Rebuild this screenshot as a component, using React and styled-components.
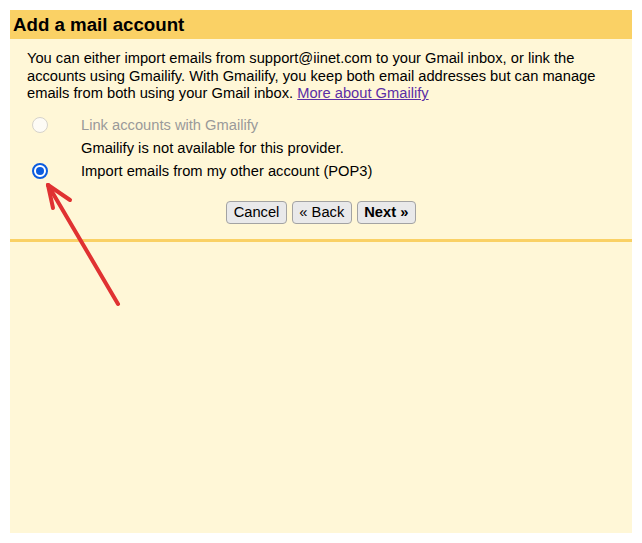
import React from "react";
import styled, { createGlobalStyle } from "styled-components";

const Global = createGlobalStyle`
  html, body { margin: 0; padding: 0; background: #ffffff; }
  body { font-family: "Liberation Sans", Arial, sans-serif; color: #000; }
`;

const Page = styled.div`
  position: relative;
  padding: 10px 10px 10px 10px;
  width: 642px;
  height: 543px;
  box-sizing: border-box;
`;

const Panel = styled.div`
  background: #fff7d7;
  height: 523px;
  display: flex;
  flex-direction: column;
`;

const Header = styled.div`
  background: #fad165;
  height: 29px;
  display: flex;
  align-items: center;
  padding-left: 3px;
  font-size: 18.7px;
  font-weight: bold;
`;

const Body = styled.div`
  padding: 11px 17px 15px 17px;
  border-bottom: 3px solid #fad165;
`;

const Intro = styled.p`
  margin: 0;
  font-size: 14.7px;
  line-height: 17.5px;
`;

const Link = styled.a`
  color: #5b2ea6;
  text-decoration: underline;
`;

const Options = styled.div`
  margin-top: 14px;
  display: grid;
  grid-template-columns: 54px 1fr;
  row-gap: 6px;
  align-items: center;
`;

const Radio = styled.span`
  justify-self: start;
  margin-left: 5px;
  width: 16px;
  height: 16px;
  box-sizing: border-box;
  border-radius: 50%;
  border: ${(p) => (p.checked ? "2px solid #0b5cdf" : "1.5px solid #d6d3cb")};
  background: ${(p) => (p.checked ? "#ffffff" : "#fdfbf6")};
  display: flex;
  align-items: center;
  justify-content: center;
  &::after {
    content: "";
    display: ${(p) => (p.checked ? "block" : "none")};
    width: 8px;
    height: 8px;
    border-radius: 50%;
    background: #0b5cdf;
  }
`;

const Label = styled.span`
  font-size: 14.7px;
  line-height: 17px;
  color: ${(p) => (p.disabled ? "#9a9a9a" : "#000")};
  grid-column: 2;
`;

const Buttons = styled.div`
  margin-top: 21px;
  display: flex;
  justify-content: center;
  gap: 5px;
`;

const Button = styled.button`
  font-family: "Liberation Sans", Arial, sans-serif;
  font-size: 14.7px;
  font-weight: ${(p) => (p.primary ? "bold" : "normal")};
  height: 23px;
  padding: 0 6.5px;
  border: 1px solid #a3a3a3;
  border-radius: 4px;
  background: #e9e9ea;
  color: #000;
`;

const Arrow = styled.svg`
  position: absolute;
  left: 0;
  top: 0;
  pointer-events: none;
`;

export default function App() {
  return (
    <>
      <Global />
      <Page>
        <Panel>
          <Header>Add a mail account</Header>
          <Body>
            <Intro>
              You can either import emails from support@iinet.com to your Gmail
              inbox, or link the accounts using Gmailify. With Gmailify, you keep
              both email addresses but can manage emails from both using your
              Gmail inbox. <Link href="#">More about Gmailify</Link>
            </Intro>
            <Options>
              <Radio />
              <Label disabled>Link accounts with Gmailify</Label>
              <Label>Gmailify is not available for this provider.</Label>
              <Radio checked />
              <Label>Import emails from my other account (POP3)</Label>
            </Options>
            <Buttons>
              <Button>Cancel</Button>
              <Button>« Back</Button>
              <Button primary>Next »</Button>
            </Buttons>
          </Body>
        </Panel>
        <Arrow width="642" height="543" viewBox="0 0 642 543">
          <g stroke="#e03232" strokeWidth="4" strokeLinecap="round" fill="none">
            <path d="M118 304 L48 185" />
            <path d="M48 185 L53 208" />
            <path d="M48 185 L70 200" />
          </g>
        </Arrow>
      </Page>
    </>
  );
}
